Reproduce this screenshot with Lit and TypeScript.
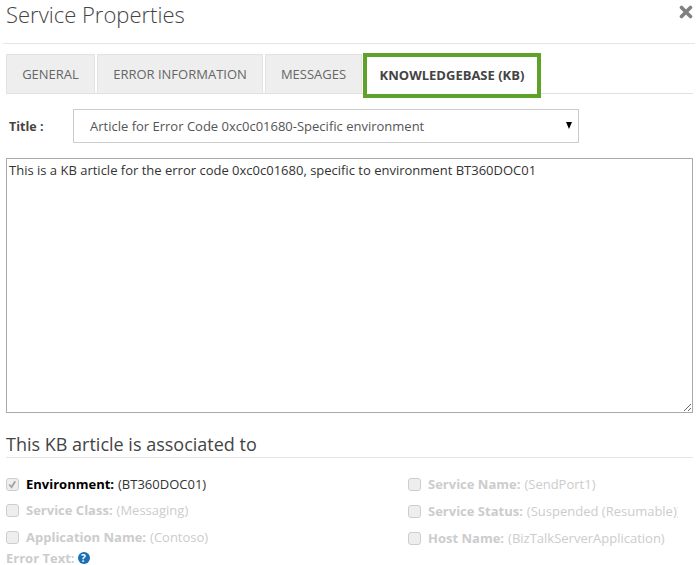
import { LitElement, html, css } from "lit";
import { customElement } from "lit/decorators.js";

const check = html`<svg class="tick" viewBox="0 0 12 12"><path d="M2.5 6 L5 9 L9 2.5" fill="none" stroke="#a3a3a3" stroke-width="2"/></svg>`;

@customElement("app-root")
export class AppRoot extends LitElement {
  static styles = css`
    :host { display: block; width: 700px; height: 565px; overflow: hidden; background: #fff; font-family: "Open Sans", sans-serif; color: #333; box-sizing: border-box; }
    * { box-sizing: border-box; }
    .header { display: flex; justify-content: space-between; margin: 0 5px 0 3px; height: 44px; border-bottom: 1px solid #e5e5e5; padding-left: 3px; }
    .header h1 { margin: 0; font-size: 22px; font-weight: 300; line-height: 28px; color: #444; }
    .close { width: 14px; height: 14px; margin: 5px 2px 0 0; }
    .tabs { display: flex; align-items: flex-start; margin: 9px 7px 0 6px; height: 41px; border-bottom: 1px solid #e0e0e0; }
    .tab { height: 40px; margin-top: 1px; background: #eee; border: 1px solid #e2e2e2; font-size: 13px; line-height: 38px; color: #666; text-align: center; margin-right: 2px; }
    .tab.general { width: 89px; }
    .tab.error { width: 166px; }
    .tab.messages { width: 97px; margin-right: 0; }
    .tab.active { width: 178px; height: 45px; margin: 0 0 0 1px; background: #fff; border: 4px solid #5fa229; font-weight: 700; font-size: 13px; line-height: 36px; color: #444; }
    .title-row { display: flex; align-items: center; margin: 15px 0 0 9px; }
    .title-row label { width: 64px; font-size: 12.5px; font-weight: 700; color: #444; }
    .select-wrap { position: relative; width: 506px; height: 34px; }
    select { width: 100%; height: 100%; appearance: none; background: #fff; border: 1px solid #ccc; font: 13px "Open Sans", sans-serif; color: #555; padding: 0 0 0 16px; border-radius: 0; }
    .arrow { position: absolute; right: 7px; top: 13px; width: 0; height: 0; border-left: 3.5px solid transparent; border-right: 3.5px solid transparent; border-top: 7px solid #000; }
    textarea { display: block; width: 687px; height: 255px; margin: 15px 0 0 6px; border: 1px solid #a9a9a9; font: 13px/18px "Open Sans", sans-serif; color: #333; padding: 2px; border-radius: 0; outline: none; }
    h2 { margin: 21px 7px 0 6px; height: 24px; font-size: 18px; font-weight: 400; line-height: 20px; color: #444; border-bottom: 1px solid #e5e5e5; }
    .grid { display: flex; margin: 17px 0 0 6px; }
    .col { display: flex; flex-direction: column; }
    .col.left { width: 402px; }
    .col.left .item:nth-child(2) { margin: 8px 0 9px; }
    .col.right { gap: 9px; }
    .item { display: flex; align-items: center; height: 18px; white-space: nowrap; font-size: 13px; color: #ccc; overflow: hidden; width: 270px; }
    .item b { font-weight: 700; margin-right: 4px; }
    .item.on { color: #333; }
    .item.on b { color: #000; }
    .box { width: 13px; height: 13px; flex: none; margin-right: 7px; border: 1px solid #cdcdcd; border-radius: 3px; background: #eee; display: flex; }
    .tick { width: 11px; height: 11px; }
    .errtext { margin: 4px 0 0 6px; font-size: 13px; line-height: 14px; font-weight: 700; color: #ccc; display: flex; align-items: center; height: 14px; gap: 3px; }
    .help { width: 12px; height: 12px; border-radius: 50%; background: #1a6fb5; color: #fff; font-size: 10px; line-height: 12px; text-align: center; font-weight: 700; }
  `;

  render() {
    return html`
      <div class="header">
        <h1>Service Properties</h1>
        <svg class="close" viewBox="0 0 14 14"><path d="M2.5 2.5 L11.5 11.5 M11.5 2.5 L2.5 11.5" stroke="#808080" stroke-width="3.6" stroke-linecap="round"/></svg>
      </div>
      <div class="tabs">
        <div class="tab general">GENERAL</div>
        <div class="tab error">ERROR INFORMATION</div>
        <div class="tab messages">MESSAGES</div>
        <div class="tab active">KNOWLEDGEBASE (KB)</div>
      </div>
      <div class="title-row">
        <label>Title :</label>
        <div class="select-wrap">
          <select><option>Article for Error Code 0xc0c01680-Specific environment</option></select>
          <span class="arrow"></span>
        </div>
      </div>
      <textarea .value=${"This is a KB article for the error code 0xc0c01680, specific to environment BT360DOC01"}></textarea>
      <h2>This KB article is associated to</h2>
      <div class="grid">
        <div class="col left">
          <div class="item on"><span class="box">${check}</span><b>Environment:</b>(BT360DOC01)</div>
          <div class="item"><span class="box"></span><b>Service Class:</b>(Messaging)</div>
          <div class="item"><span class="box"></span><b>Application Name:</b>(Contoso)</div>
        </div>
        <div class="col right">
          <div class="item"><span class="box"></span><b>Service Name:</b>(SendPort1)</div>
          <div class="item"><span class="box"></span><b>Service Status:</b>(Suspended (Resumable))</div>
          <div class="item"><span class="box"></span><b>Host Name:</b>(BizTalkServerApplication)</div>
        </div>
      </div>
      <div class="errtext">Error Text: <span class="help">?</span></div>
    `;
  }
}
